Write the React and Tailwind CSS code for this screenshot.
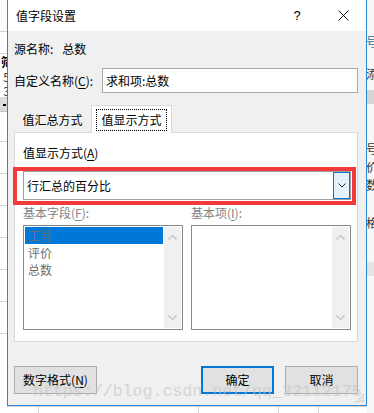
import React from "react";

const FONT = { fontFamily: '"Noto Sans CJK SC", "Noto Sans", sans-serif' };

function ChevronUp() {
  return (
    <svg width="9" height="6" viewBox="0 0 9 6" fill="none">
      <path d="M0.5 5.5 L4.5 1.5 L8.5 5.5" stroke="#c2c2c2" strokeWidth="1.2" />
    </svg>
  );
}
function ChevronDown() {
  return (
    <svg width="9" height="6" viewBox="0 0 9 6" fill="none">
      <path d="M0.5 0.5 L4.5 4.5 L8.5 0.5" stroke="#c2c2c2" strokeWidth="1.2" />
    </svg>
  );
}

function ListBox({ items, selected }) {
  return (
    <div className="h-[105px] border border-[#828790] bg-white p-[1px] flex">
      <div className="flex-1 flex flex-col">
        {items.map((it, i) => (
          <div
            key={it}
            className={
              "h-[17px] flex items-center pl-[3px] text-[12px] leading-[16px] text-[#6d6d6d] " +
              (i === selected ? "bg-[#0078d7]" : "")
            }
          >
            {it}
          </div>
        ))}
      </div>
      <div className="w-[17px] ml-[1px] bg-[#f0f0f0] flex flex-col items-center justify-between py-[7px]">
        <ChevronUp />
        <ChevronDown />
      </div>
    </div>
  );
}

function LeftStrip() {
  return (
    <div className="w-[7px] h-[413px] overflow-hidden bg-white flex flex-col shrink-0">
      <div className="h-[32px] border-b border-[#d4d4d4] bg-[#fafafa]" />
      <div className="h-[22px] border-b border-[#d4d4d4]" />
      <div className="h-[16px] flex items-center justify-end font-bold text-[12px] leading-[14px] text-black overflow-hidden">
        <span className="-mr-[6px]">筛</span>
      </div>
      <div className="h-[14px] flex items-center justify-end text-[12px] leading-[14px] text-[#333] overflow-hidden">
        <span className="-mr-[3px]">5</span>
      </div>
      <div className="h-[14px] flex items-center justify-end text-[12px] leading-[14px] text-[#333] overflow-hidden border-b border-[#d4d4d4]">
        <span className="-mr-[3px]">3</span>
      </div>
      <div className="h-[14px] bg-[#dcdcdc] flex items-center justify-end border-b border-[#c8c8c8]">
        <span className="w-[3px] h-[2px] bg-black mr-[1px]" />
      </div>
      <div className="h-[30px] border-b border-[#d4d4d4]" />
      <div className="h-[32px] border-b border-[#d4d4d4]" />
      <div className="h-[32px] border-b border-[#d4d4d4]" />
      <div className="h-[32px] border-b border-[#d4d4d4]" />
      <div className="h-[32px] border-b border-[#d4d4d4]" />
      <div className="h-[32px] border-b border-[#d4d4d4]" />
      <div className="h-[32px] border-b border-[#d4d4d4]" />
      <div className="flex-1" />
    </div>
  );
}

function RightStrip() {
  const row = "flex items-center text-[12px] leading-[14px] overflow-hidden";
  return (
    <div className="w-[7px] h-[413px] overflow-hidden bg-[#f7f7f7] flex flex-col shrink-0">
      <div className="h-[32px]" />
      <div className={"h-[20px] text-[#1f6f8b] " + row}>
        <span className="-ml-[1px]">号</span>
      </div>
      <div className="h-[14px]" />
      <div className={"h-[16px] text-[#333] " + row}>
        <span className="-ml-[1px]">添</span>
      </div>
      <div className="h-[8px]" />
      <div className="h-[14px] bg-[#d6d6d6]" />
      <div className="h-[36px]" />
      <div className={"h-[18px] text-[#333] " + row}>
        <span className="-ml-[1px]">号</span>
      </div>
      <div className={"h-[18px] text-[#333] " + row}>
        <span className="-ml-[1px]">价</span>
      </div>
      <div className={"h-[18px] text-[#333] " + row}>
        <span className="-ml-[1px]">数</span>
      </div>
      <div className="h-[20px]" />
      <div className={"h-[18px] text-[#333] " + row}>
        <span className="-ml-[1px]">格</span>
      </div>
      <div className="h-[30px]" />
      <div className="h-[14px] bg-[#e4e4e4]" />
      <div className="flex-1" />
    </div>
  );
}

export default function App() {
  return (
    <div className="w-[374px] h-[413px] overflow-hidden flex bg-white" style={FONT}>
      <LeftStrip />
      <div className="w-[360px] flex flex-col shrink-0">
        <div className="relative w-[360px] h-[406px] border-x border-b border-[#2a86d6] bg-[#f0f0f0] flex flex-col">
          {/* title bar */}
          <div className="h-[31px] bg-white flex items-center shrink-0">
            <div className="pl-[8px] text-[12px] leading-[16px] text-black flex-1">值字段设置</div>
            <div className="w-[46px] h-[31px] flex items-center justify-center text-[13px] text-black" style={{ fontFamily: '"Liberation Sans", sans-serif' }}>
              ?
            </div>
            <div className="w-[46px] h-[31px] flex items-center justify-center">
              <svg width="11" height="11" viewBox="0 0 11 11">
                <path d="M0.5 0.5 L10.5 10.5 M10.5 0.5 L0.5 10.5" stroke="#111" strokeWidth="1" />
              </svg>
            </div>
          </div>

          {/* body */}
          <div className="pl-[6px] pr-[8px] flex flex-col text-[12px] leading-[16px] text-black">
            <div className="mt-[10px] h-[16px] flex items-center">
              <span>源名称:</span>
              <span className="ml-[9px]">总数</span>
            </div>

            <div className="mt-[11px] h-[25px] flex items-center">
              <span className="w-[88px] shrink-0">
                自定义名称(<span className="underline underline-offset-2">C</span>):
              </span>
              <div className="flex-1 h-[25px] bg-white border border-[#a9a9a9] flex items-center pl-[3px]">
                求和项:总数
              </div>
            </div>

            {/* tabs */}
            <div className="mt-[12px] h-[27px] flex items-end relative z-10">
              <div className="w-[77px] h-[25px] flex items-center justify-center">值汇总方式</div>
              <div className="w-[81px] h-[28px] -mb-[1px] bg-white border border-b-0 border-[#d9d9d9] flex items-start justify-center pt-[3px]">
                <div className="border border-dotted border-black px-[4px] h-[22px] flex items-center">值显示方式</div>
              </div>
            </div>

            {/* panel */}
            <div className="h-[210px] bg-white border border-[#d9d9d9] pl-[8px] pr-[6px] flex flex-col">
              <div className="mt-[12px] h-[16px]">
                值显示方式(<span className="underline underline-offset-2">A</span>)
              </div>
              <div className="mt-[10px] relative h-[29px]">
                <div className="h-[29px] border border-[#a0a0a0] bg-white flex items-center">
                  <span className="flex-1 pl-[3px]">行汇总的百分比</span>
                  <div className="w-[17px] h-[27px] bg-[#e5f1fb] border border-[#0078d7] flex items-center justify-center">
                    <svg width="8" height="5" viewBox="0 0 8 5" fill="none">
                      <path d="M0.5 0.5 L4 4 L7.5 0.5" stroke="#222" strokeWidth="1" />
                    </svg>
                  </div>
                </div>
                <div className="absolute -left-[10px] -top-[4px] -right-[5px] -bottom-[5px] border-[4px] border-[#f23a3a] pointer-events-none" />
              </div>
              <div className="mt-[5px] grid grid-cols-2 gap-[8px] text-[#838383]">
                <div className="h-[16px]">
                  基本字段(<span className="underline underline-offset-2">F</span>):
                </div>
                <div className="h-[16px]">
                  基本项(<span className="underline underline-offset-2">I</span>):
                </div>
              </div>
              <div className="mt-[4px] grid grid-cols-2 gap-[8px]">
                <ListBox items={["工号", "评价", "总数"]} selected={0} />
                <ListBox items={[]} selected={-1} />
              </div>
            </div>

            {/* buttons */}
            <div className="mt-[24px] h-[28px] flex">
              <div className="w-[83px] h-[28px] bg-[#e1e1e1] border border-[#adadad] flex items-center justify-center">
                数字格式(<span className="underline underline-offset-2">N</span>)
              </div>
              <div className="ml-auto w-[73px] h-[28px] bg-[#e1e1e1] border-2 border-[#0078d7] flex items-center justify-center">
                确定
              </div>
              <div className="ml-[11px] w-[73px] h-[28px] bg-[#e1e1e1] border border-[#adadad] flex items-center justify-center">
                取消
              </div>
            </div>
          </div>

          {/* watermark */}
          <div
            className="absolute left-[25px] top-[382px] text-[16.6px] leading-[20px] text-[#c4c4c4] opacity-60 whitespace-nowrap pointer-events-none"
            style={{ fontFamily: '"Liberation Mono", monospace' }}
          >
            https://blog.csdn.net/qq_32112175
          </div>

          {/* resize grip */}
          <svg className="absolute right-[1px] bottom-[1px]" width="10" height="10" viewBox="0 0 10 10">
            <path d="M9 3 L3 9 M9 6 L6 9 M9 0 L0 9" stroke="#a0a0a0" strokeWidth="1" strokeDasharray="1 1" />
          </svg>
        </div>
        <div className="flex-1 bg-white border-t border-[#d4d4d4] flex">
          <div className="w-[32px] border-r border-[#d4d4d4]" />
          <div className="w-[160px] border-r border-[#d4d4d4]" />
          <div className="w-[80px] border-r border-[#d4d4d4]" />
          <div className="w-[40px] border-r border-[#d4d4d4]" />
        </div>
      </div>
      <RightStrip />
    </div>
  );
}
